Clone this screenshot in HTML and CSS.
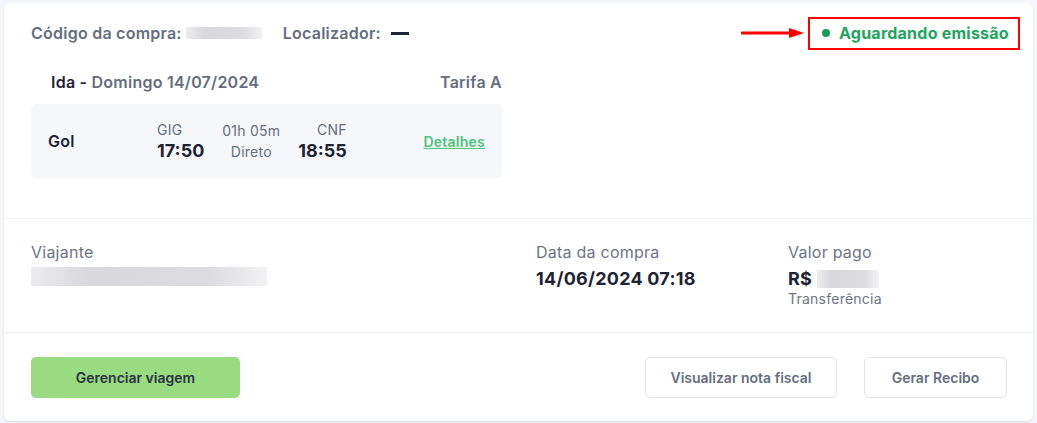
FILE: index.html
```html
<!DOCTYPE html>
<html lang="pt-BR">
<head>
    <meta charset="UTF-8">
    <meta name="viewport" content="width=device-width, initial-scale=1.0">
    <title>Minhas viagens</title>
    <link rel="stylesheet" href="styles.css">
</head>
<body>
    <div class="card">
        <section class="trip">
            <div class="top-row">
                <div class="codes">
                    <span class="code-label">Código da compra:</span>
                    <span class="blur blur-code"></span>
                    <span class="code-label loc">Localizador:</span>
                    <span class="dash"></span>
                </div>
                <div class="status-wrap">
                    <svg class="arrow" width="64" height="12" viewBox="0 0 64 12">
                        <line x1="1" y1="6" x2="50" y2="6" stroke="#f00" stroke-width="3" stroke-linecap="round"/>
                        <polygon points="48,1 63,6 48,11" fill="#f00"/>
                    </svg>
                    <div class="status">
                        <span class="dot"></span>
                        Aguardando emissão
                    </div>
                </div>
            </div>

            <div class="leg">
                <div class="leg-head">
                    <span><b>Ida -</b> Domingo 14/07/2024</span>
                    <span>Tarifa A</span>
                </div>
                <div class="flight">
                    <div class="airline">Gol</div>
                    <div class="point">
                        <span class="iata">GIG</span>
                        <span class="time">17:50</span>
                    </div>
                    <div class="duration">
                        <span>01h 05m</span>
                        <span>Direto</span>
                    </div>
                    <div class="point arr">
                        <span class="iata">CNF</span>
                        <span class="time">18:55</span>
                    </div>
                    <a class="details" href="#">Detalhes</a>
                </div>
            </div>
        </section>

        <section class="info">
            <div>
                <div class="label">Viajante</div>
                <div class="blur blur-name"></div>
            </div>
            <div>
                <div class="label">Data da compra</div>
                <div class="value">14/06/2024 07:18</div>
            </div>
            <div>
                <div class="label">Valor pago</div>
                <div class="value">R$ <span class="blur blur-price"></span></div>
                <div class="method">Transferência</div>
            </div>
        </section>

        <section class="actions">
            <button class="btn btn-green">Gerenciar viagem</button>
            <div class="right-btns">
                <button class="btn btn-outline nota">Visualizar nota fiscal</button>
                <button class="btn btn-outline recibo">Gerar Recibo</button>
            </div>
        </section>
    </div>
</body>
</html>
```

FILE: styles.css
```css
body {
    margin: 0;
    padding: 3px 4px 2px;
    background: #f4f6fa;
    font-family: Inter, 'Noto Sans', sans-serif;
    color: #1e2433;
    letter-spacing: 0.015em;
}
.card {
    background: #fff;
    border-radius: 6px;
    box-shadow: 0 1px 2px rgba(30, 40, 60, 0.12);
}
.trip {
    padding: 14px 13px 40px 27px;
    border-bottom: 1px solid #eff1f5;
}
.top-row {
    display: flex;
    justify-content: space-between;
    align-items: center;
    height: 32px;
}
.codes {
    display: flex;
    align-items: center;
}
.code-label {
    font-size: 16px;
    font-weight: 600;
    color: #646e80;
}
.loc {
    margin-left: 21px;
}
.blur {
    display: inline-block;
    background: linear-gradient(90deg, #ececef, #d8d8dc 25%, #dcdce0 75%, #f2f2f4);
}
.blur-code {
    width: 76px;
    height: 12px;
    margin-left: 4px;
}
.dash {
    display: inline-block;
    width: 18px;
    height: 3px;
    background: #1e2433;
    margin-left: 10px;
}
.status-wrap {
    display: flex;
    align-items: center;
    gap: 3px;
}
.arrow {
    display: block;
}
.status {
    display: flex;
    align-items: center;
    box-sizing: border-box;
    width: 212px;
    height: 33px;
    border: 2px solid #f00;
    padding-left: 12px;
    font-size: 16px;
    font-weight: 700;
    color: #1ea55d;
}
.dot {
    width: 8px;
    height: 8px;
    border-radius: 50%;
    background: #1a9a55;
    margin-right: 9px;
}
.leg {
    width: 471px;
    margin-top: 23px;
}
.leg-head {
    display: flex;
    justify-content: space-between;
    padding-left: 20px;
    font-size: 16px;
    font-weight: 600;
    color: #646e80;
    line-height: 20px;
}
.leg-head b {
    color: #1e2433;
    font-weight: 600;
}
.flight {
    display: flex;
    align-items: center;
    height: 74px;
    margin-top: 12px;
    padding: 0 17px;
    background: #f5f7fb;
    border-radius: 5px;
}
.airline {
    width: 109px;
    font-size: 16px;
    font-weight: 600;
    color: #1e2433;
}
.point, .duration {
    display: flex;
    flex-direction: column;
    gap: 1px;
}
.point.arr {
    align-items: flex-end;
}
.iata {
    font-size: 14px;
    color: #646e80;
    line-height: 18px;
}
.time {
    font-size: 18px;
    font-weight: 700;
    line-height: 22px;
    letter-spacing: 0;
    color: #1e2433;
}
.duration {
    align-items: center;
    margin: 0 18px;
    font-size: 14px;
    color: #646e80;
    line-height: 20px;
}
.details {
    margin-left: auto;
    font-size: 14px;
    font-weight: 600;
    color: #4cc27a;
}
.info {
    display: grid;
    grid-template-columns: 505px 252px auto;
    padding: 23px 27px 24px;
    height: 66px;
    border-bottom: 1px solid #eff1f5;
}
.label {
    font-size: 16px;
    color: #6c7588;
    line-height: 20px;
}
.value {
    display: flex;
    align-items: center;
    margin-top: 7px;
    font-size: 18px;
    font-weight: 700;
    line-height: 20px;
}
.blur-name {
    width: 236px;
    height: 19px;
    margin-top: 5px;
}
.blur-price {
    width: 62px;
    height: 18px;
    margin-left: 5px;
}
.method {
    margin-top: 2px;
    font-size: 14px;
    color: #6c7588;
    line-height: 16px;
}
.actions {
    display: flex;
    justify-content: space-between;
    padding: 24px 26px 23px 27px;
}
.right-btns {
    display: flex;
    gap: 27px;
}
.btn {
    height: 41px;
    border-radius: 5px;
    font-family: inherit;
    font-size: 14px;
    font-weight: 600;
    letter-spacing: 0;
    cursor: pointer;
}
.btn-green {
    width: 209px;
    background: #98db80;
    border: none;
    color: #2c3340;
}
.btn-outline {
    background: #fff;
    border: 1px solid #e2e5ea;
    color: #646e80;
}
.nota {
    width: 192px;
}
.recibo {
    width: 143px;
}
```
